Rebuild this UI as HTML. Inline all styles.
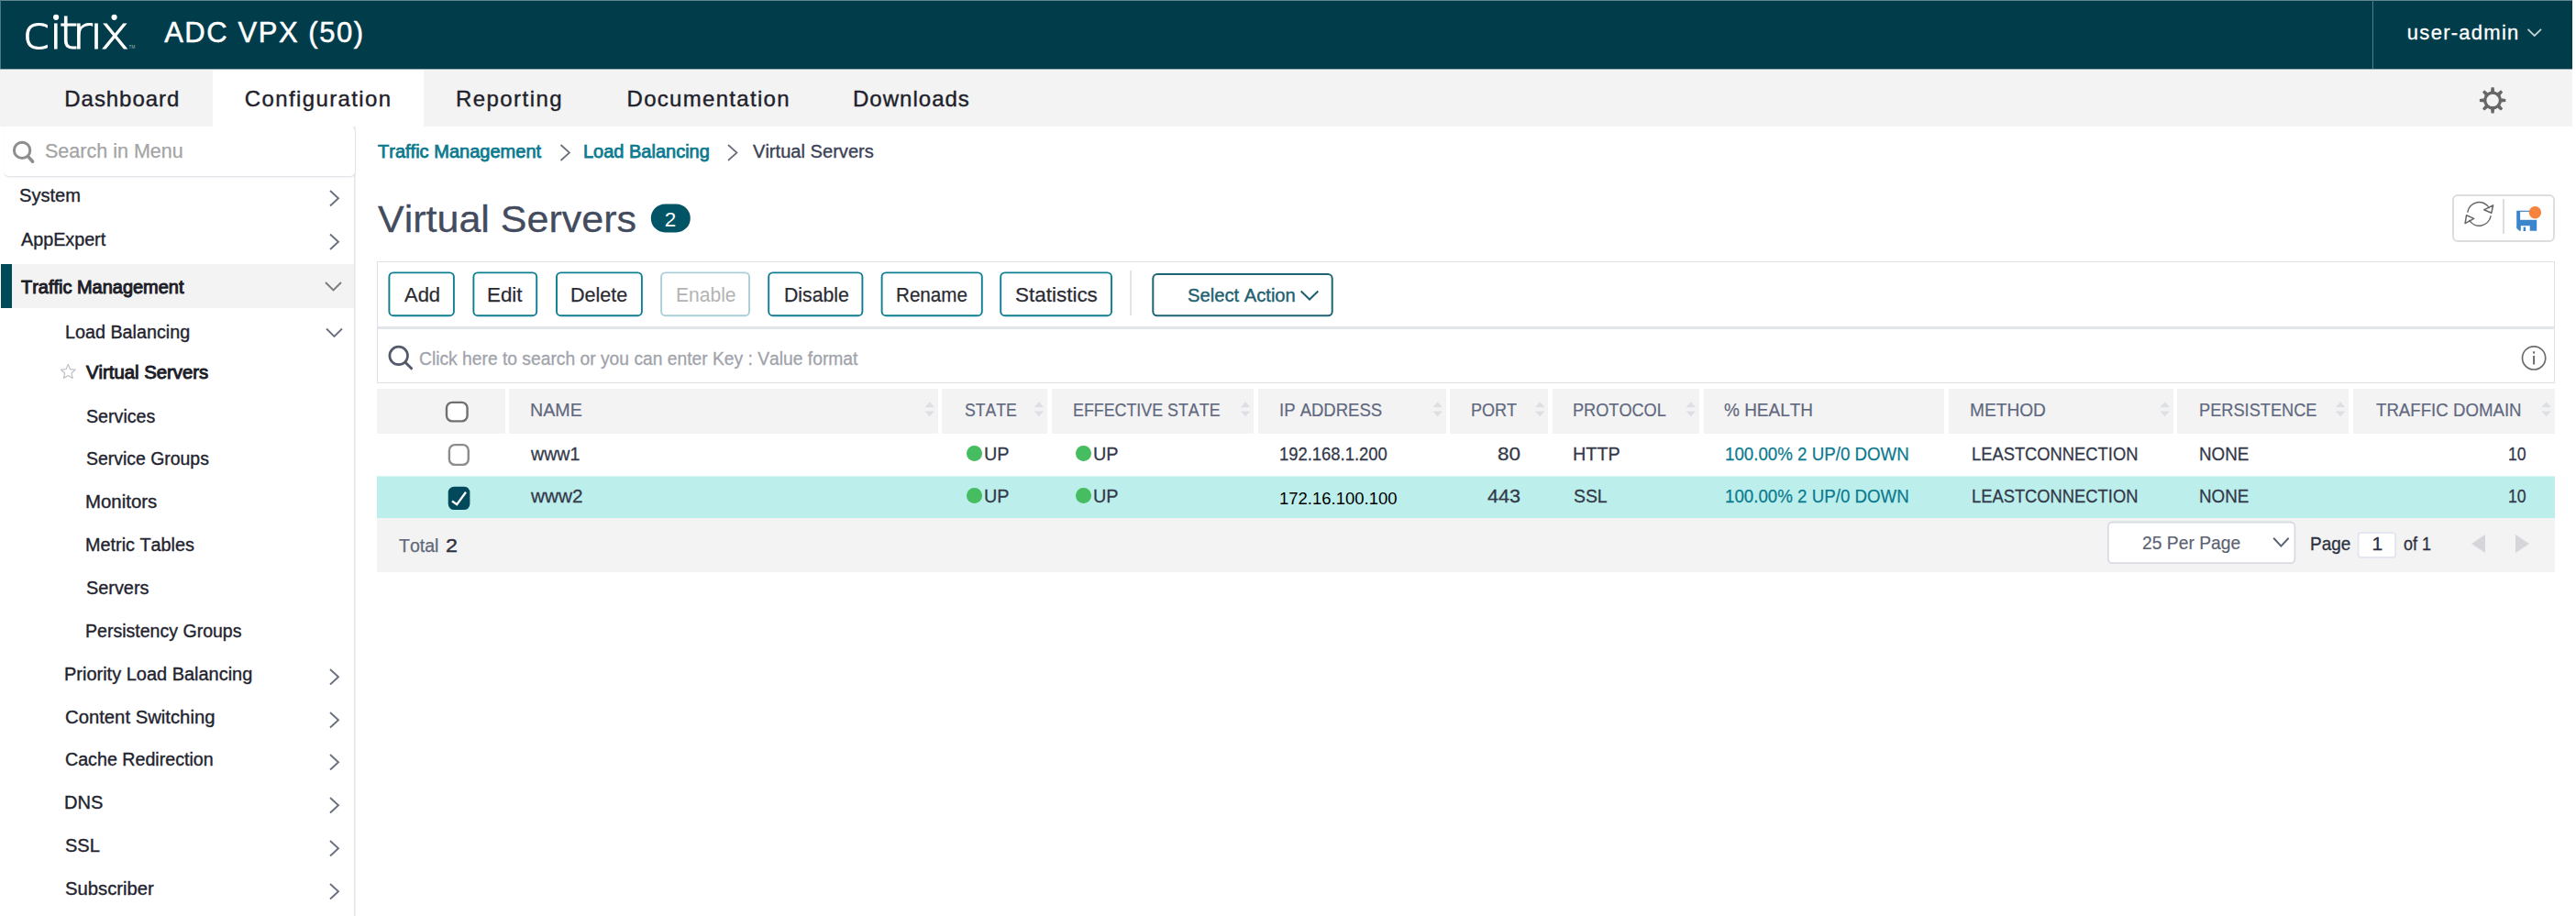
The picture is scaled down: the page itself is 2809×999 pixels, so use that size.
<!DOCTYPE html>
<html lang="en"><head><meta charset="utf-8"><title>Citrix ADC VPX - Virtual Servers</title>
<style>
html,body{margin:0;padding:0;background:#fff;overflow:hidden}
body{width:2809px;height:999px;position:relative;font-family:'Liberation Sans',sans-serif}
.t{position:absolute;white-space:pre;display:block;font-kerning:none;transform-origin:0 0;font-size:21px;line-height:27px}
.b{position:absolute;display:block}
</style></head><body>
<div class="b" style="left:0px;top:0px;width:2805px;height:75px;background:#003c4a"></div>
<div class="b" style="left:0px;top:0px;width:2805px;height:1px;background:#5f8790"></div>
<div class="b" style="left:0px;top:0px;width:1px;height:75px;background:#4b7a85"></div>
<div class="b" style="left:2587px;top:0px;width:1px;height:75px;background:#4f7d88"></div>
<svg class="b" style="left:0;top:0" width="170" height="75" viewBox="0 0 170 75">
<g transform="scale(1.08,1)"><text x="23.19 49.61 59.53 72.6 90.5 101.15" y="53.2" font-family="'DejaVu Sans Light','DejaVu Sans',sans-serif" font-weight="200" font-size="50" fill="#fff" stroke="#fff" stroke-width="1.0">citrix</text></g>
<rect x="56" y="10" width="10.5" height="13.6" fill="#003c4a"/><rect x="100" y="10" width="10.5" height="13.6" fill="#003c4a"/>
<circle cx="61.1" cy="18.8" r="3.1" fill="#fff"/><circle cx="124.6" cy="18.8" r="3.1" fill="#fff"/>
<text x="140.6" y="52.9" font-family="'Liberation Sans',sans-serif" font-size="4.6" fill="#9fb6bc">TM</text>
</svg>
<span class="t" style="left:179.14px;top:17px;font-size:31px;line-height:37px;color:#fff;letter-spacing:1.559px;-webkit-text-stroke:0.5px #fff;">ADC VPX (50)</span>
<span class="t" style="left:2624.87px;top:22px;font-size:22px;line-height:28px;color:#fff;letter-spacing:1.268px;-webkit-text-stroke:0.3px #fff;">user-admin</span>
<svg class="b" style="left:2754px;top:29px" width="21" height="14" viewBox="0 0 21 14"><path d="M2.5 2.8 L9.7 10 L17 2.8" fill="none" stroke="#c3d2d6" stroke-width="1.8"/></svg>
<div class="b" style="left:0px;top:75px;width:2805px;height:63px;background:#f3f3f3"></div>
<div class="b" style="left:231.5px;top:75px;width:230.0px;height:63px;background:#fff"></div>
<div class="b" style="left:0px;top:75px;width:2805px;height:1px;background:#92aaaf"></div>
<span class="t" style="left:70.33px;top:93px;font-size:24px;line-height:30px;color:#1f1f2b;letter-spacing:0.938px;-webkit-text-stroke:0.4px #1f1f2b;">Dashboard</span>
<span class="t" style="left:266.78px;top:93px;font-size:24px;line-height:30px;color:#1f1f2b;letter-spacing:1.385px;-webkit-text-stroke:0.4px #1f1f2b;">Configuration</span>
<span class="t" style="left:497.03px;top:93px;font-size:24px;line-height:30px;color:#1f1f2b;letter-spacing:1.432px;-webkit-text-stroke:0.4px #1f1f2b;">Reporting</span>
<span class="t" style="left:683.53px;top:93px;font-size:24px;line-height:30px;color:#1f1f2b;letter-spacing:1.300px;-webkit-text-stroke:0.4px #1f1f2b;">Documentation</span>
<span class="t" style="left:930.03px;top:93px;font-size:24px;line-height:30px;color:#1f1f2b;letter-spacing:1.013px;-webkit-text-stroke:0.4px #1f1f2b;">Downloads</span>
<svg class="b" style="left:2700px;top:90px" width="39" height="39" viewBox="0 0 39 39"><g transform="translate(18.1 19.4)"><circle r="8.35" fill="none" stroke="#666" stroke-width="3.3"/><path transform="rotate(0)" d="M-2.1 -9.2 L-1.5 -14.2 H1.5 L2.1 -9.2 Z" fill="#666"/><path transform="rotate(45)" d="M-2.1 -9.2 L-1.5 -14.2 H1.5 L2.1 -9.2 Z" fill="#666"/><path transform="rotate(90)" d="M-2.1 -9.2 L-1.5 -14.2 H1.5 L2.1 -9.2 Z" fill="#666"/><path transform="rotate(135)" d="M-2.1 -9.2 L-1.5 -14.2 H1.5 L2.1 -9.2 Z" fill="#666"/><path transform="rotate(180)" d="M-2.1 -9.2 L-1.5 -14.2 H1.5 L2.1 -9.2 Z" fill="#666"/><path transform="rotate(225)" d="M-2.1 -9.2 L-1.5 -14.2 H1.5 L2.1 -9.2 Z" fill="#666"/><path transform="rotate(270)" d="M-2.1 -9.2 L-1.5 -14.2 H1.5 L2.1 -9.2 Z" fill="#666"/><path transform="rotate(315)" d="M-2.1 -9.2 L-1.5 -14.2 H1.5 L2.1 -9.2 Z" fill="#666"/></g></svg>
<div class="b" style="left:386px;top:138px;width:1px;height:861px;background:#e1e4e9"></div>
<div class="b" style="left:387px;top:138px;width:1px;height:861px;background:#eff1f4"></div>
<div class="b" style="left:4px;top:138px;width:384px;height:55px;border:1.5px solid #e2e5ea;border-top:none;border-left:none;border-radius:0 6px 6px 6px;box-shadow:0 1px 2px rgba(0,0,0,.06);background:#fff;box-sizing:border-box"></div>
<svg class="b" style="left:8px;top:148px" width="37" height="37" viewBox="0 0 37 37"><circle cx="16.1" cy="15.9" r="8.7" fill="none" stroke="#8e8e8e" stroke-width="3"/><path d="M22.6 22.6 L27.6 28.2" stroke="#8e8e8e" stroke-width="3.6" stroke-linecap="round"/></svg>
<span class="t" style="left:48.82px;top:151px;font-size:22px;line-height:28px;color:#a4a4a4;transform:scaleX(0.9781);-webkit-text-stroke:0.25px #a4a4a4;">Search in Menu</span>
<span class="t" style="left:21.39px;top:200px;font-size:19.5px;line-height:26px;color:#22232e;transform:scaleX(1.0296);-webkit-text-stroke:0.35px #22232e;">System</span>
<svg class="b" style="left:358px;top:206px" width="15" height="23" viewBox="0 0 15 23"><path d="M2 2 L11 10.2 L2 18.5" fill="none" stroke="#6a7080" stroke-width="1.9"/></svg>
<span class="t" style="left:22.76px;top:248px;font-size:19.5px;line-height:26px;color:#22232e;transform:scaleX(1.0124);-webkit-text-stroke:0.35px #22232e;">AppExpert</span>
<svg class="b" style="left:358px;top:253px" width="15" height="24" viewBox="0 0 15 24"><g transform="translate(0.00 0.50)"><path d="M2 2 L11 10.2 L2 18.5" fill="none" stroke="#6a7080" stroke-width="1.9"/></g></svg>
<div class="b" style="left:1px;top:288px;width:385px;height:48px;background:#f3f3f3"></div>
<div class="b" style="left:1px;top:288px;width:12.4px;height:48px;background:#004a5a"></div>
<span class="t" style="left:22.65px;top:300px;font-size:19.5px;line-height:26px;color:#1d1d28;transform:scaleX(1.0236);-webkit-text-stroke:0.95px #1d1d28;">Traffic Management</span>
<svg class="b" style="left:353px;top:306px" width="23" height="15" viewBox="0 0 23 15"><path d="M2 2 L10.5 10.5 L19 2" fill="none" stroke="#7b7b7b" stroke-width="1.9"/></svg>
<span class="t" style="left:70.68px;top:349px;font-size:19.5px;line-height:26px;color:#22232e;transform:scaleX(1.0130);-webkit-text-stroke:0.35px #22232e;">Load Balancing</span>
<svg class="b" style="left:354px;top:356px" width="23" height="16" viewBox="0 0 23 16"><g transform="translate(0.00 0.50)"><path d="M2 2 L10.5 10.5 L19 2" fill="none" stroke="#6a7080" stroke-width="1.9"/></g></svg>
<svg class="b" style="left:64px;top:395px" width="22" height="22" viewBox="0 0 22 22"><g transform="translate(0.80 0.60)"><path transform="scale(0.93)" d="M10.2 1.9 L12.6 7.6 L18.6 8.2 L14.1 12.2 L15.4 18.1 L10.2 15 L5 18.1 L6.3 12.2 L1.8 8.2 L7.8 7.6 Z" fill="none" stroke="#bfc1c5" stroke-width="1.3" stroke-linejoin="round"/></g></svg>
<span class="t" style="left:93.81px;top:393px;font-size:19.5px;line-height:26px;color:#1d1d28;transform:scaleX(1.0418);-webkit-text-stroke:0.95px #1d1d28;">Virtual Servers</span>
<span class="t" style="left:93.51px;top:441px;font-size:19.5px;line-height:26px;color:#22232e;transform:scaleX(1.0071);-webkit-text-stroke:0.35px #22232e;">Services</span>
<span class="t" style="left:93.52px;top:487px;font-size:19.5px;line-height:26px;color:#22232e;transform:scaleX(0.9963);-webkit-text-stroke:0.35px #22232e;">Service Groups</span>
<span class="t" style="left:92.73px;top:534px;font-size:19.5px;line-height:26px;color:#22232e;transform:scaleX(1.0460);-webkit-text-stroke:0.35px #22232e;">Monitors</span>
<span class="t" style="left:92.77px;top:581px;font-size:19.5px;line-height:26px;color:#22232e;transform:scaleX(1.0163);-webkit-text-stroke:0.35px #22232e;">Metric Tables</span>
<span class="t" style="left:93.50px;top:628px;font-size:19.5px;line-height:26px;color:#22232e;transform:scaleX(1.0184);-webkit-text-stroke:0.35px #22232e;">Servers</span>
<span class="t" style="left:92.80px;top:675px;font-size:19.5px;line-height:26px;color:#22232e;transform:scaleX(1.0021);-webkit-text-stroke:0.35px #22232e;">Persistency Groups</span>
<span class="t" style="left:70.16px;top:722px;font-size:19.5px;line-height:26px;color:#22232e;transform:scaleX(1.0239);-webkit-text-stroke:0.35px #22232e;">Priority Load Balancing</span>
<svg class="b" style="left:358px;top:728px" width="15" height="23" viewBox="0 0 15 23"><path d="M2 2 L11 10.2 L2 18.5" fill="none" stroke="#6a7080" stroke-width="1.9"/></svg>
<span class="t" style="left:70.77px;top:769px;font-size:19.5px;line-height:26px;color:#22232e;transform:scaleX(1.0399);-webkit-text-stroke:0.35px #22232e;">Content Switching</span>
<svg class="b" style="left:358px;top:775px" width="15" height="23" viewBox="0 0 15 23"><path d="M2 2 L11 10.2 L2 18.5" fill="none" stroke="#6a7080" stroke-width="1.9"/></svg>
<span class="t" style="left:70.80px;top:815px;font-size:19.5px;line-height:26px;color:#22232e;transform:scaleX(1.0078);-webkit-text-stroke:0.35px #22232e;">Cache Redirection</span>
<svg class="b" style="left:358px;top:821px" width="15" height="23" viewBox="0 0 15 23"><path d="M2 2 L11 10.2 L2 18.5" fill="none" stroke="#6a7080" stroke-width="1.9"/></svg>
<span class="t" style="left:70.15px;top:862px;font-size:19.5px;line-height:26px;color:#22232e;transform:scaleX(1.0291);-webkit-text-stroke:0.35px #22232e;">DNS</span>
<svg class="b" style="left:358px;top:868px" width="15" height="23" viewBox="0 0 15 23"><path d="M2 2 L11 10.2 L2 18.5" fill="none" stroke="#6a7080" stroke-width="1.9"/></svg>
<span class="t" style="left:70.89px;top:909px;font-size:19.5px;line-height:26px;color:#22232e;transform:scaleX(1.0276);-webkit-text-stroke:0.35px #22232e;">SSL</span>
<svg class="b" style="left:358px;top:915px" width="15" height="23" viewBox="0 0 15 23"><path d="M2 2 L11 10.2 L2 18.5" fill="none" stroke="#6a7080" stroke-width="1.9"/></svg>
<span class="t" style="left:70.88px;top:956px;font-size:19.5px;line-height:26px;color:#22232e;transform:scaleX(1.0392);-webkit-text-stroke:0.35px #22232e;">Subscriber</span>
<svg class="b" style="left:358px;top:962px" width="15" height="23" viewBox="0 0 15 23"><path d="M2 2 L11 10.2 L2 18.5" fill="none" stroke="#6a7080" stroke-width="1.9"/></svg>
<span class="t" style="left:411.85px;top:152px;font-size:19.5px;line-height:26px;color:#0b7a8f;transform:scaleX(1.0271);-webkit-text-stroke:0.75px #0b7a8f;">Traffic Management</span>
<svg class="b" style="left:609px;top:155px" width="17" height="25" viewBox="0 0 17 25"><path d="M2.5 3 L12 11.5 L2.5 20" fill="none" stroke="#6a6f7c" stroke-width="1.7"/></svg>
<span class="t" style="left:636.16px;top:152px;font-size:19.5px;line-height:26px;color:#0b7a8f;transform:scaleX(1.0252);-webkit-text-stroke:0.75px #0b7a8f;">Load Balancing</span>
<svg class="b" style="left:791px;top:155px" width="18" height="25" viewBox="0 0 18 25"><g transform="translate(0.50 0.00)"><path d="M2.5 3 L12 11.5 L2.5 20" fill="none" stroke="#6a6f7c" stroke-width="1.7"/></g></svg>
<span class="t" style="left:820.51px;top:152px;font-size:19.5px;line-height:26px;color:#3b4256;transform:scaleX(1.0308);-webkit-text-stroke:0.35px #3b4256;">Virtual Servers</span>
<span class="t" style="left:412.01px;top:216px;font-size:40px;line-height:46px;color:#434b5e;transform:scaleX(1.0749);-webkit-text-stroke:0.3px #434b5e;">Virtual Servers</span>
<svg class="b" style="left:708px;top:221px" width="49" height="36" viewBox="0 0 49 36"><rect x="1.8" y="1.4" width="43" height="31" rx="15.5" fill="#005466"/></svg>
<span class="t" style="left:724.77px;top:226px;font-size:22.5px;line-height:28px;color:#fff;">2</span>
<div class="b" style="left:2674.2px;top:211.8px;width:111.6px;height:52px;border:2px solid #dcdddf;border-radius:6px;box-sizing:border-box;background:#fff"></div>
<div class="b" style="left:2729.3px;top:216.7px;width:1.5px;height:38.0px;background:#dddddd"></div>
<svg class="b" style="left:2687px;top:216px" width="35" height="35" viewBox="0 0 35 35"><g fill="none" stroke="#666" stroke-width="1.5" stroke-linejoin="round">
<path d="M3.7 15.6 A12.8 12.8 0 0 1 27.6 11.2"/><path d="M31.6 7.8 L21.7 12.8 L29.8 16.3 Z"/>
<path d="M29.1 19.4 A12.8 12.8 0 0 1 5.4 23.8"/><path d="M1.1 27.7 L10.7 22.4 L2.5 18.8 Z"/></g></svg>
<svg class="b" style="left:2742px;top:224px" width="31" height="31" viewBox="0 0 31 31"><path d="M2.2 5.8 H24.2 V27.8 H5.2 L2.2 24.8 Z" fill="#3a85cc"/><rect x="6.1" y="6.9" width="18.4" height="8.9" fill="#fff"/><rect x="6.8" y="22.2" width="9.9" height="5.8" fill="#fff"/><rect x="9.6" y="23.6" width="2.5" height="4.4" fill="#3a85cc"/><circle cx="22.4" cy="7.8" r="6.7" fill="#f5833f"/></svg>
<div class="b" style="left:411px;top:285px;width:2374.6px;height:133px;border:1.5px solid #dde0e5;box-sizing:border-box;background:#fff"></div>
<div class="b" style="left:411px;top:356px;width:2374.6px;height:3px;background:#e2e5e9"></div>
<svg class="b" style="left:422px;top:295px" width="76" height="53" viewBox="0 0 76 53"><g transform="translate(0.40 0.00)"><rect x="2" y="2.4" width="70.50" height="46.9" rx="4.6" fill="#fff" stroke="#0f7e92" stroke-width="1.9"/></g></svg>
<span class="t" style="left:441.16px;top:308px;font-size:22px;line-height:28px;color:#2b2b33;transform:scaleX(0.9978);-webkit-text-stroke:0.25px #2b2b33;">Add</span>
<svg class="b" style="left:514px;top:295px" width="75" height="53" viewBox="0 0 75 53"><g transform="translate(0.40 0.00)"><rect x="2" y="2.4" width="68.80" height="46.9" rx="4.6" fill="#fff" stroke="#0f7e92" stroke-width="1.9"/></g></svg>
<span class="t" style="left:531.17px;top:308px;font-size:22px;line-height:28px;color:#2b2b33;transform:scaleX(1.0155);-webkit-text-stroke:0.25px #2b2b33;">Edit</span>
<svg class="b" style="left:605px;top:295px" width="98" height="53" viewBox="0 0 98 53"><rect x="2" y="2.4" width="92.90" height="46.9" rx="4.6" fill="#fff" stroke="#0f7e92" stroke-width="1.9"/></svg>
<span class="t" style="left:622.23px;top:308px;font-size:22px;line-height:28px;color:#2b2b33;transform:scaleX(0.9784);-webkit-text-stroke:0.25px #2b2b33;">Delete</span>
<svg class="b" style="left:719px;top:295px" width="101" height="53" viewBox="0 0 101 53"><g transform="translate(0.10 0.00)"><rect x="2" y="2.4" width="95.90" height="46.9" rx="4.6" fill="#fff" stroke="#a9cfd8" stroke-width="1.9"/></g></svg>
<span class="t" style="left:737.07px;top:308px;font-size:22px;line-height:28px;color:#b3b3b3;transform:scaleX(0.9571);">Enable</span>
<svg class="b" style="left:836px;top:295px" width="108" height="53" viewBox="0 0 108 53"><g transform="translate(0.20 0.00)"><rect x="2" y="2.4" width="102.20" height="46.9" rx="4.6" fill="#fff" stroke="#0f7e92" stroke-width="1.9"/></g></svg>
<span class="t" style="left:854.66px;top:308px;font-size:22px;line-height:28px;color:#2b2b33;transform:scaleX(0.9648);-webkit-text-stroke:0.25px #2b2b33;">Disable</span>
<svg class="b" style="left:959px;top:295px" width="115" height="53" viewBox="0 0 115 53"><g transform="translate(0.60 0.00)"><rect x="2" y="2.4" width="109.20" height="46.9" rx="4.6" fill="#fff" stroke="#0f7e92" stroke-width="1.9"/></g></svg>
<span class="t" style="left:977.01px;top:308px;font-size:22px;line-height:28px;color:#2b2b33;transform:scaleX(0.9369);-webkit-text-stroke:0.25px #2b2b33;">Rename</span>
<svg class="b" style="left:1089px;top:295px" width="126" height="53" viewBox="0 0 126 53"><g transform="translate(0.20 0.00)"><rect x="2" y="2.4" width="120.80" height="46.9" rx="4.6" fill="#fff" stroke="#0f7e92" stroke-width="1.9"/></g></svg>
<span class="t" style="left:1106.98px;top:308px;font-size:22px;line-height:28px;color:#2b2b33;transform:scaleX(1.0206);-webkit-text-stroke:0.25px #2b2b33;">Statistics</span>
<div class="b" style="left:1232px;top:295px;width:2px;height:49px;background:#e3e4e6"></div>
<svg class="b" style="left:1255px;top:297px" width="203" height="53" viewBox="0 0 203 53"><rect x="2.3" y="2.1" width="195.4" height="45.2" rx="4.6" fill="#fff" stroke="#1f6474" stroke-width="2"/></svg>
<span class="t" style="left:1295.38px;top:309px;font-size:20.5px;line-height:26px;color:#1f5f70;transform:scaleX(0.9848);-webkit-text-stroke:0.4px #1f5f70;">Select Action</span>
<svg class="b" style="left:1416px;top:314px" width="25" height="17" viewBox="0 0 25 17"><path d="M2.7 3.5 L12 12.5 L21.3 3.5" fill="none" stroke="#1f5f70" stroke-width="2"/></svg>
<svg class="b" style="left:420px;top:373px" width="37" height="37" viewBox="0 0 37 37"><circle cx="14.7" cy="14.9" r="9.8" fill="none" stroke="#535a6b" stroke-width="2.7"/><path d="M22 22.2 L28.6 28.8" stroke="#535a6b" stroke-width="3" stroke-linecap="round"/></svg>
<span class="t" style="left:456.82px;top:378px;font-size:20.5px;line-height:26px;color:#a0a3ab;transform:scaleX(0.9393);-webkit-text-stroke:0.3px #a0a3ab;">Click here to search or you can enter Key : Value format</span>
<svg class="b" style="left:2748px;top:375px" width="31" height="31" viewBox="0 0 31 31"><circle cx="15.1" cy="15.4" r="12.6" fill="none" stroke="#6b6b6b" stroke-width="1.7"/><rect x="14.1" y="13" width="2" height="9.5" fill="#6b6b6b"/><rect x="14.1" y="8.3" width="2" height="2.3" fill="#6b6b6b"/></svg>
<div class="b" style="left:411px;top:424px;width:140px;height:49px;background:#f3f3f3"></div>
<div class="b" style="left:555px;top:424px;width:468px;height:49px;background:#f3f3f3"></div>
<div class="b" style="left:1027px;top:424px;width:115px;height:49px;background:#f3f3f3"></div>
<div class="b" style="left:1147px;top:424px;width:220px;height:49px;background:#f3f3f3"></div>
<div class="b" style="left:1372px;top:424px;width:205px;height:49px;background:#f3f3f3"></div>
<div class="b" style="left:1581px;top:424px;width:107px;height:49px;background:#f3f3f3"></div>
<div class="b" style="left:1693px;top:424px;width:160px;height:49px;background:#f3f3f3"></div>
<div class="b" style="left:1858px;top:424px;width:262px;height:49px;background:#f3f3f3"></div>
<div class="b" style="left:2125px;top:424px;width:245px;height:49px;background:#f3f3f3"></div>
<div class="b" style="left:2374px;top:424px;width:187px;height:49px;background:#f3f3f3"></div>
<div class="b" style="left:2566px;top:424px;width:220px;height:49px;background:#f3f3f3"></div>
<span class="t" style="left:577.69px;top:433px;color:#5f687e;transform:scaleX(0.9372);-webkit-text-stroke:0.2px #5f687e;">NAME</span>
<svg class="b" style="left:1006px;top:437px" width="16" height="20" viewBox="0 0 16 20"><g transform="translate(0.80 0.00)"><path d="M7 1.3 L12.3 7.2 H1.7 Z" fill="#dcdfe4"/><path d="M7 17.3 L12.3 11.4 H1.7 Z" fill="#dcdfe4"/></g></svg>
<span class="t" style="left:1051.80px;top:433px;color:#5f687e;transform:scaleX(0.8387);-webkit-text-stroke:0.2px #5f687e;">STATE</span>
<svg class="b" style="left:1125px;top:437px" width="16" height="20" viewBox="0 0 16 20"><g transform="translate(0.90 0.00)"><path d="M7 1.3 L12.3 7.2 H1.7 Z" fill="#dcdfe4"/><path d="M7 17.3 L12.3 11.4 H1.7 Z" fill="#dcdfe4"/></g></svg>
<span class="t" style="left:1169.94px;top:433px;color:#5f687e;transform:scaleX(0.8493);-webkit-text-stroke:0.2px #5f687e;">EFFECTIVE STATE</span>
<svg class="b" style="left:1351px;top:437px" width="16" height="20" viewBox="0 0 16 20"><g transform="translate(0.20 0.00)"><path d="M7 1.3 L12.3 7.2 H1.7 Z" fill="#dcdfe4"/><path d="M7 17.3 L12.3 11.4 H1.7 Z" fill="#dcdfe4"/></g></svg>
<span class="t" style="left:1394.59px;top:433px;color:#5f687e;transform:scaleX(0.8818);-webkit-text-stroke:0.2px #5f687e;">IP ADDRESS</span>
<svg class="b" style="left:1560px;top:437px" width="16" height="20" viewBox="0 0 16 20"><g transform="translate(0.70 0.00)"><path d="M7 1.3 L12.3 7.2 H1.7 Z" fill="#dcdfe4"/><path d="M7 17.3 L12.3 11.4 H1.7 Z" fill="#dcdfe4"/></g></svg>
<span class="t" style="left:1603.52px;top:433px;color:#5f687e;transform:scaleX(0.8569);-webkit-text-stroke:0.2px #5f687e;">PORT</span>
<svg class="b" style="left:1672px;top:437px" width="16" height="20" viewBox="0 0 16 20"><g transform="translate(0.20 0.00)"><path d="M7 1.3 L12.3 7.2 H1.7 Z" fill="#dcdfe4"/><path d="M7 17.3 L12.3 11.4 H1.7 Z" fill="#dcdfe4"/></g></svg>
<span class="t" style="left:1715.31px;top:433px;color:#5f687e;transform:scaleX(0.8637);-webkit-text-stroke:0.2px #5f687e;">PROTOCOL</span>
<svg class="b" style="left:1836px;top:437px" width="16" height="20" viewBox="0 0 16 20"><g transform="translate(0.80 0.00)"><path d="M7 1.3 L12.3 7.2 H1.7 Z" fill="#dcdfe4"/><path d="M7 17.3 L12.3 11.4 H1.7 Z" fill="#dcdfe4"/></g></svg>
<span class="t" style="left:1880.02px;top:433px;color:#5f687e;transform:scaleX(0.9037);-webkit-text-stroke:0.2px #5f687e;">% HEALTH</span>
<span class="t" style="left:2147.73px;top:433px;color:#5f687e;transform:scaleX(0.9109);-webkit-text-stroke:0.2px #5f687e;">METHOD</span>
<svg class="b" style="left:2353px;top:437px" width="16" height="20" viewBox="0 0 16 20"><g transform="translate(0.70 0.00)"><path d="M7 1.3 L12.3 7.2 H1.7 Z" fill="#dcdfe4"/><path d="M7 17.3 L12.3 11.4 H1.7 Z" fill="#dcdfe4"/></g></svg>
<span class="t" style="left:2397.71px;top:433px;color:#5f687e;transform:scaleX(0.8669);-webkit-text-stroke:0.2px #5f687e;">PERSISTENCE</span>
<svg class="b" style="left:2545px;top:437px" width="16" height="20" viewBox="0 0 16 20"><g transform="translate(0.10 0.00)"><path d="M7 1.3 L12.3 7.2 H1.7 Z" fill="#dcdfe4"/><path d="M7 17.3 L12.3 11.4 H1.7 Z" fill="#dcdfe4"/></g></svg>
<span class="t" style="left:2590.78px;top:433px;color:#5f687e;transform:scaleX(0.8882);-webkit-text-stroke:0.2px #5f687e;">TRAFFIC DOMAIN</span>
<svg class="b" style="left:2769px;top:437px" width="16" height="20" viewBox="0 0 16 20"><g transform="translate(0.50 0.00)"><path d="M7 1.3 L12.3 7.2 H1.7 Z" fill="#dcdfe4"/><path d="M7 17.3 L12.3 11.4 H1.7 Z" fill="#dcdfe4"/></g></svg>
<svg class="b" style="left:484px;top:436px" width="31" height="29" viewBox="0 0 31 29"><rect x="3" y="2.9" width="22.6" height="20.5" rx="6.2" fill="#fff" stroke="#707070" stroke-width="2.4"/></svg>
<svg class="b" style="left:486px;top:482px" width="31" height="31" viewBox="0 0 31 31"><rect x="3.9" y="3.1" width="20.9" height="21.8" rx="6.2" fill="#fff" stroke="#8c8c8c" stroke-width="2.4"/></svg>
<svg class="b" style="left:411px;top:519px" width="2376" height="48" viewBox="0 0 2376 48"><g transform="translate(0.00 0.40)"><rect x="0" y="0" width="2375" height="45.8" fill="#bcefec"/></g></svg>
<svg class="b" style="left:486px;top:529px" width="31" height="31" viewBox="0 0 31 31"><rect x="2.7" y="1.7" width="23.7" height="25.4" rx="6.5" fill="#024a5b"/><path d="M7 17.5 L12.2 21.2 L22 7.8" fill="none" stroke="#fff" stroke-width="2.3" stroke-linejoin="miter"/></svg>
<span class="t" style="left:578.53px;top:481px;color:#333849;transform:scaleX(0.9345);-webkit-text-stroke:0.28px #333849;">www1</span>
<div class="b" style="left:1054.20px;top:486.30px;width:16.6px;height:16.6px;border-radius:50%;background:#45bd60"></div>
<span class="t" style="left:1073.07px;top:481px;color:#333849;transform:scaleX(0.9454);-webkit-text-stroke:0.28px #333849;">UP</span>
<div class="b" style="left:1173.10px;top:486.30px;width:16.6px;height:16.6px;border-radius:50%;background:#45bd60"></div>
<span class="t" style="left:1191.97px;top:481px;color:#333849;transform:scaleX(0.9454);-webkit-text-stroke:0.28px #333849;">UP</span>
<span class="t" style="left:1394.90px;top:481px;color:#333849;transform:scaleX(0.8773);-webkit-text-stroke:0.28px #333849;">192.168.1.200</span>
<span class="t" style="left:1632.93px;top:481px;color:#333849;transform:scaleX(1.0682);-webkit-text-stroke:0.28px #333849;">80</span>
<span class="t" style="left:1715.18px;top:481px;color:#333849;transform:scaleX(0.9424);-webkit-text-stroke:0.28px #333849;">HTTP</span>
<span class="t" style="left:1881.17px;top:481px;color:#0b7a8f;transform:scaleX(0.8912);-webkit-text-stroke:0.25px #0b7a8f;">100.00% 2 UP/0 DOWN</span>
<span class="t" style="left:2149.80px;top:481px;color:#333849;transform:scaleX(0.8734);-webkit-text-stroke:0.28px #333849;">LEASTCONNECTION</span>
<span class="t" style="left:2397.86px;top:481px;color:#333849;transform:scaleX(0.8958);-webkit-text-stroke:0.28px #333849;">NONE</span>
<span class="t" style="left:2735.26px;top:481px;color:#333849;transform:scaleX(0.8406);-webkit-text-stroke:0.28px #333849;">10</span>
<span class="t" style="left:578.53px;top:527px;color:#333849;transform:scaleX(0.9884);-webkit-text-stroke:0.28px #333849;">www2</span>
<div class="b" style="left:1054.20px;top:532.30px;width:16.6px;height:16.6px;border-radius:50%;background:#45bd60"></div>
<span class="t" style="left:1073.07px;top:527px;color:#333849;transform:scaleX(0.9454);-webkit-text-stroke:0.28px #333849;">UP</span>
<div class="b" style="left:1173.10px;top:532.30px;width:16.6px;height:16.6px;border-radius:50%;background:#45bd60"></div>
<span class="t" style="left:1191.97px;top:527px;color:#333849;transform:scaleX(0.9454);-webkit-text-stroke:0.28px #333849;">UP</span>
<span class="t" style="left:1394.89px;top:532px;font-size:18.5px;line-height:24px;color:#000;transform:scaleX(0.9995);">172.16.100.100</span>
<span class="t" style="left:1621.90px;top:527px;color:#333849;transform:scaleX(1.0288);-webkit-text-stroke:0.28px #333849;">443</span>
<span class="t" style="left:1715.92px;top:527px;color:#333849;transform:scaleX(0.9227);-webkit-text-stroke:0.28px #333849;">SSL</span>
<span class="t" style="left:1881.17px;top:527px;color:#0b7a8f;transform:scaleX(0.8912);-webkit-text-stroke:0.25px #0b7a8f;">100.00% 2 UP/0 DOWN</span>
<span class="t" style="left:2149.80px;top:527px;color:#333849;transform:scaleX(0.8734);-webkit-text-stroke:0.28px #333849;">LEASTCONNECTION</span>
<span class="t" style="left:2397.86px;top:527px;color:#333849;transform:scaleX(0.8958);-webkit-text-stroke:0.28px #333849;">NONE</span>
<span class="t" style="left:2735.26px;top:527px;color:#333849;transform:scaleX(0.8406);-webkit-text-stroke:0.28px #333849;">10</span>
<div class="b" style="left:411px;top:565px;width:2375px;height:59px;background:#f3f3f3"></div>
<span class="t" style="left:435.06px;top:582px;font-size:20.5px;line-height:26px;color:#60687a;transform:scaleX(0.9533);-webkit-text-stroke:0.25px #60687a;">Total</span>
<span class="t" style="left:485.63px;top:581px;color:#2d3040;transform:scaleX(1.1080);-webkit-text-stroke:0.4px #2d3040;">2</span>
<svg class="b" style="left:2296px;top:567px" width="211" height="51" viewBox="0 0 211 51"><rect x="2.8" y="2.5" width="203.6" height="44.6" rx="4.5" fill="#fff" stroke="#d9dbe3" stroke-width="1.8"/></svg>
<span class="t" style="left:2336.43px;top:578px;color:#5a6273;transform:scaleX(0.9184);-webkit-text-stroke:0.2px #5a6273;">25 Per Page</span>
<svg class="b" style="left:2476px;top:583px" width="25" height="19" viewBox="0 0 25 19"><path d="M3.2 3.8 L11.4 12.6 L19.6 3.8" fill="none" stroke="#5a6273" stroke-width="2"/></svg>
<span class="t" style="left:2519.24px;top:579px;color:#2d3040;transform:scaleX(0.9054);-webkit-text-stroke:0.3px #2d3040;">Page</span>
<svg class="b" style="left:2569px;top:578px" width="49" height="35" viewBox="0 0 49 35"><rect x="2.6" y="3.1" width="40.6" height="26.8" rx="3" fill="#fff" stroke="#e1e5ef" stroke-width="1.8"/></svg>
<span class="t" style="left:2586.40px;top:579px;color:#2d3040;-webkit-text-stroke:0.3px #2d3040;">1</span>
<span class="t" style="left:2620.54px;top:579px;color:#2d3040;transform:scaleX(0.8575);-webkit-text-stroke:0.3px #2d3040;">of 1</span>
<svg class="b" style="left:2693px;top:581px" width="21" height="25" viewBox="0 0 21 25"><path d="M17 2 V22 L2 12 Z" fill="#d4d6da"/></svg>
<svg class="b" style="left:2740px;top:581px" width="21" height="25" viewBox="0 0 21 25"><path d="M3 2 V22 L18 12 Z" fill="#d4d6da"/></svg>
</body></html>
